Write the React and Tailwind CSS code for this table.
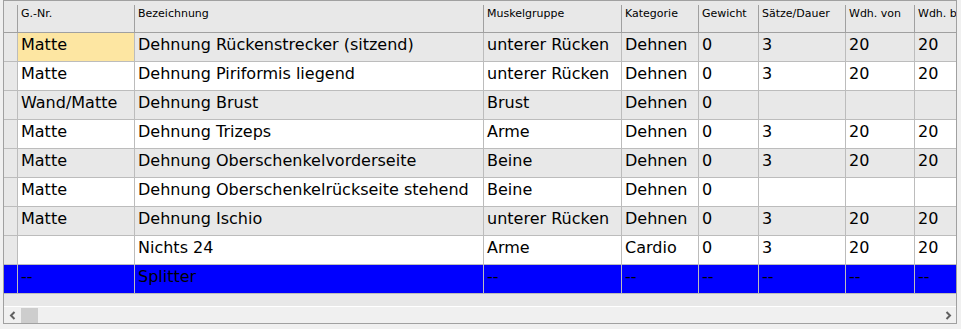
const COLS = [
  { key: 'nr',    title: 'G.-Nr.',       w: 'w-[117px]' },
  { key: 'name',  title: 'Bezeichnung',  w: 'w-[349px]' },
  { key: 'group', title: 'Muskelgruppe', w: 'w-[138px]' },
  { key: 'cat',   title: 'Kategorie',    w: 'w-[77px]' },
  { key: 'kg',    title: 'Gewicht',      w: 'w-[60px]' },
  { key: 'sets',  title: 'Sätze/Dauer',  w: 'w-[87px]' },
  { key: 'from',  title: 'Wdh. von',     w: 'w-[69px]' },
  { key: 'to',    title: 'Wdh. bis',     w: 'w-[80px]' },
]

const ROWS = [
  { nr: 'Matte',      name: 'Dehnung Rückenstrecker (sitzend)',       group: 'unterer Rücken', cat: 'Dehnen', kg: '0', sets: '3', from: '20', to: '20' },
  { nr: 'Matte',      name: 'Dehnung Piriformis liegend',             group: 'unterer Rücken', cat: 'Dehnen', kg: '0', sets: '3', from: '20', to: '20' },
  { nr: 'Wand/Matte', name: 'Dehnung Brust',                          group: 'Brust',          cat: 'Dehnen', kg: '0', sets: '',  from: '',   to: ''   },
  { nr: 'Matte',      name: 'Dehnung Trizeps',                        group: 'Arme',           cat: 'Dehnen', kg: '0', sets: '3', from: '20', to: '20' },
  { nr: 'Matte',      name: 'Dehnung Oberschenkelvorderseite',        group: 'Beine',          cat: 'Dehnen', kg: '0', sets: '3', from: '20', to: '20' },
  { nr: 'Matte',      name: 'Dehnung Oberschenkelrückseite stehend',  group: 'Beine',          cat: 'Dehnen', kg: '0', sets: '',  from: '',   to: ''   },
  { nr: 'Matte',      name: 'Dehnung Ischio',                         group: 'unterer Rücken', cat: 'Dehnen', kg: '0', sets: '3', from: '20', to: '20' },
  { nr: '',           name: 'Nichts 24',                              group: 'Arme',           cat: 'Cardio', kg: '0', sets: '3', from: '20', to: '20' },
  { nr: '--',         name: 'Splitter',                               group: '--',             cat: '--',     kg: '--', sets: '--', from: '--', to: '--', splitter: true },
]

function Chevron({ left }) {
  return (
    <svg width="7" height="9" viewBox="0 0 7 9">
      <path
        d={left ? 'M5.5 1 L2 4.5 L5.5 8' : 'M1.5 1 L5 4.5 L1.5 8'}
        fill="none"
        stroke="#606060"
        strokeWidth="2"
      />
    </svg>
  )
}

function Row({ row, index }) {
  const bg = row.splitter ? 'bg-[#0000ff]' : index % 2 === 0 ? 'bg-[#e8e8e8]' : 'bg-white'
  return (
    <div className={`flex h-[29px] shrink-0 border-b border-[#bcbcbc] ${bg}`}>
      <div className={`w-[14px] shrink-0 border-r border-[#bcbcbc] ${row.splitter ? 'bg-[#0000ff]' : 'bg-[#e8e8e8]'}`} />
      {COLS.map((c, ci) => (
        <div
          key={c.key}
          className={`${c.w} shrink-0 overflow-hidden whitespace-nowrap border-r border-[#bcbcbc] pl-[3px] pt-[2px] text-[16px] leading-[19px] text-black ${index === 0 && ci === 0 ? 'bg-[#fde6a2]' : ''}`}
        >
          {row[c.key]}
        </div>
      ))}
    </div>
  )
}

export default function App() {
  return (
    <div className="h-[329px] w-full bg-[#f0f0f0] font-['DejaVu_Sans',sans-serif]">
      <div className="ml-[3px] flex h-[324px] w-[954px] flex-col overflow-hidden border border-[#a0a0a0] bg-[#e8e8e8]">
        {/* column titles */}
        <div className="flex h-[32px] shrink-0 border-b border-[#a0a0a0] pt-[4px]">
          <div className="w-[14px] shrink-0 border-r border-[#a0a0a0]" />
          {COLS.map(c => (
            <div
              key={c.key}
              className={`${c.w} shrink-0 overflow-hidden whitespace-nowrap border-r border-[#a0a0a0] pl-[3px] pt-[2px] text-[11px] leading-[13px] text-black`}
            >
              {c.title}
            </div>
          ))}
        </div>

        {ROWS.map((r, i) => (
          <Row key={i} row={r} index={i} />
        ))}

        <div className="flex-1" />

        {/* horizontal scrollbar */}
        <div className="flex h-[17px] shrink-0 border-t border-white bg-[#f0f0f0]">
          <div className="flex w-[17px] shrink-0 items-center justify-center">
            <Chevron left />
          </div>
          <div className="mt-[1px] h-[15px] w-[17px] shrink-0 bg-[#cdcdcd]" />
          <div className="flex-1" />
          <div className="flex w-[17px] shrink-0 items-center justify-center pl-[2px]">
            <Chevron />
          </div>
        </div>
      </div>
    </div>
  )
}
